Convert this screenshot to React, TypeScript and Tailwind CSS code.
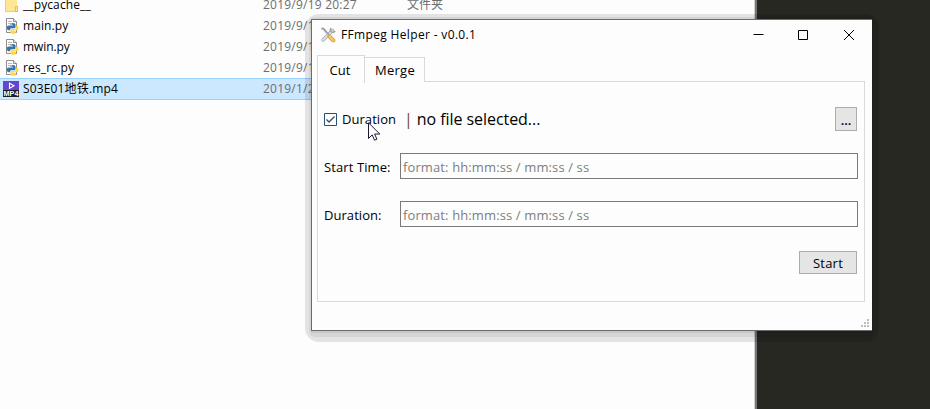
import React from "react";

const font = "font-['Open_Sans','Noto_Sans','Noto_Sans_CJK_SC',sans-serif]";

function FolderIcon() {
  return (
    <svg className="h-4 w-4" viewBox="0 0 16 16" shapeRendering="crispEdges">
      <path d="M2 0h12v14H2z" fill="#ffe694" />
      <path d="M2 0h1v14H2zM2 14h11v1H2z" fill="#f3cf6b" />
      <path d="M12 9h2v5h-2z" fill="#ffe694" stroke="#e8c05a" strokeWidth="1" />
    </svg>
  );
}

function PythonIcon() {
  return (
    <svg className="h-4 w-4" viewBox="0 0 16 16">
      <path d="M3.500.5h7l3 3v11h-10z" fill="#fdfdfd" stroke="#8d8d8d" />
      <path d="M10.500.5v3h3" fill="#eee" stroke="#8d8d8d" />
      <path d="M5 3.500h4M5 5.500h3" stroke="#b9b9b9" />
      <path d="M7.500 6.500q0-1.500 2.500-1.500t2.500 1.500V9q0 1.200-1.200 1.200H8.500q-1.600 0-1.600 2H5.500Q3.800 12 3.800 9.800t1.900-2.200H10V7H7.500z" fill="#3773a8" />
      <path d="M13.100 7.700h.8q1.700.1 1.700 2.300t-1.800 2.300h-3.500v.6h2.500v1.200Q12.800 16 10.200 16 7.500 16 7.500 14.200v-2q0-1.200 1.300-1.200h2.800q1.500 0 1.500-1.600z" fill="#ffd94a" />
      <circle cx="8.800" cy="6.300" r=".5" fill="#fff" />
    </svg>
  );
}

function Mp4Icon() {
  return (
    <svg className="h-4 w-4" viewBox="0 0 16 16">
      <rect width="16" height="9.500" fill="#6346d0" />
      <path d="M0 9h16v7H0z" fill="#1d1d22" />
      <path d="M6.500 2.200v5L11 4.700z" fill="#6346d0" stroke="#fff" strokeWidth="1.100" />
      <text x=".6" y="15.200" fontSize="7.200" fontWeight="700" fill="#fff" textLength="14.800" lengthAdjust="spacingAndGlyphs" fontFamily="Liberation Sans, sans-serif">MP4</text>
    </svg>
  );
}

const files = [
  { name: "__pycache__", date: "2019/9/19 20:27", kind: "文件夹", icon: <FolderIcon />, track: "tracking-[0.1px]" },
  { name: "main.py", date: "2019/9/19 20:27", kind: "", icon: <PythonIcon />, track: "tracking-[0.1px]" },
  { name: "mwin.py", date: "2019/9/19 20:27", kind: "", icon: <PythonIcon />, track: "tracking-[-0.1px]" },
  { name: "res_rc.py", date: "2019/9/19 20:27", kind: "", icon: <PythonIcon />, track: "tracking-[0.15px]" },
  { name: "S03E01地铁.mp4", date: "2019/1/20 20:27", kind: "", icon: <Mp4Icon />, track: "tracking-[0.15px]", selected: true },
];

function Explorer() {
  return (
    <div className="h-[409px] w-[757px] overflow-hidden border-r-2 border-[#77777a] bg-[#fdfdfd]">
      <div className="-mt-[6px] h-[415px] border-r border-[#d0d0d0]">
        {files.map((f) => (
          <div
            key={f.name}
            className={`flex items-center border-y pl-[3px] text-[12px] leading-[20px] text-black ${
              f.selected ? "h-[22px] border-[#99d1ff] bg-[#cce8ff]" : "h-[21px] border-transparent"
            }`}
          >
            {f.icon}
            <span className={`ml-1 w-[240px] whitespace-nowrap ${f.track}`}>{f.name}</span>
            <span className="w-[144px] whitespace-nowrap tracking-[0.22px] text-[#6d6d6d]">{f.date}</span>
            <span className="text-[#6d6d6d]">{f.kind}</span>
          </div>
        ))}
      </div>
    </div>
  );
}

function ToolsIcon() {
  return (
    <svg className="h-4 w-4" viewBox="0 0 16 16" fill="none">
      <path d="M12.500 3.500 3 13" stroke="#a3a6aa" strokeWidth="3.400" strokeLinecap="round" />
      <path d="M12.500 3.500 3 13" stroke="#dfe1e4" strokeWidth="2" strokeLinecap="round" />
      <path d="M11 1q-1.500 2.500.5 3.800t3.700-.8" stroke="#a3a6aa" strokeWidth="1.600" />
      <path d="M1.500 1.500 3.500 2l5 6" stroke="#9a9da2" strokeWidth="2.400" />
      <path d="M2 2l5.500 6" stroke="#e6e8ea" />
      <path d="m9.600 9.600 3.700 3.700" stroke="#c9963b" strokeWidth="4" strokeLinecap="round" />
      <path d="m9.600 9.600 3.700 3.700" stroke="#ffc955" strokeWidth="2.600" strokeLinecap="round" />
    </svg>
  );
}

function TitleBar() {
  return (
    <div className="flex h-[30px] items-center pl-2">
      <ToolsIcon />
      <span className="ml-[5px] whitespace-nowrap text-[12px] tracking-[0.34px]">FFmpeg Helper - v0.0.1</span>
      <svg className="mr-[17px] ml-auto h-[12px] w-[102px]" viewBox="0 0 102 12" fill="none" stroke="#000">
        <path d="M.5 5.500h10M45.500 1.500h9v9h-9zM91 1l10 10M101 1 91 11" />
      </svg>
    </div>
  );
}

function TimeRow({ label, track }: { label: string; track: string }) {
  return (
    <div className="flex h-[26px] items-center">
      <span className={`w-[76px] pt-[2px] whitespace-nowrap ${track}`}>{label}</span>
      <div className="flex h-[26px] w-[458px] items-center border border-[#7a7a7a] pt-[2px] pl-[2px] text-[#7d7d7d]">
        <span className="whitespace-nowrap tracking-[0.12px]">format: hh:mm:ss / mm:ss / ss</span>
      </div>
    </div>
  );
}

export default function App() {
  return (
    <div className={`relative h-[409px] w-[930px] overflow-hidden bg-[#282822] ${font}`}>
      <Explorer />
      <div className="absolute top-[14px] left-[305px] h-[328px] w-[574px] rounded-[14px] bg-black/10" />
      <div className="absolute top-[17px] left-[309px] h-[320px] w-[565px] rounded-[6px] bg-black/6" />
      <div className="absolute top-[19px] left-[311px] h-[312px] w-[561px] border-t border-b border-l border-[#6b6b6b] bg-[#fdfdfd] text-[13px] leading-[18px] text-black shadow-[0_2px_0_rgba(0,0,0,0.06)]">
        <TitleBar />
        <div className="mt-[5px] ml-[5px] flex h-[27px] items-end">
          <div className="-mr-px -mb-px flex h-[28px] w-[48px] items-center justify-center border border-b-0 border-[#d9d9d9] bg-[#fdfdfd] pr-[2px]">
            <span className="tracking-[0.1px]">Cut</span>
          </div>
          <div className="flex h-[25px] w-[61px] items-center justify-center border border-b-0 border-[#d9d9d9] bg-[#fdfdfd] pl-px">
            <span className="tracking-[0.3px]">Merge</span>
          </div>
        </div>
        <div className="-mt-px ml-[5px] h-[221px] w-[548px] border border-[#d9d9d9] pl-[6px]">
          <div className="mt-[25px] flex h-[24px] w-[533px] items-center">
            <svg className="h-[13px] w-[13px]" viewBox="0 0 13 13" fill="none" stroke="#2d4f70">
              <path d="M.5.5h12v12H.5z" />
              <path d="m2.500 6.500 2.500 2.500 5.500-5.500" strokeWidth="1.300" />
            </svg>
            <span className="ml-[5px] w-[62px] whitespace-nowrap tracking-[0.05px]">Duration</span>
            <span className="text-[16px] whitespace-nowrap tracking-[-0.06px]">
              <span className="text-[#7a4212]">|</span> no file selected...
            </span>
            <button className="ml-auto flex h-[24px] w-[22px] items-center justify-center border border-[#adadad] bg-[#e5e5e5] pt-px font-semibold">...</button>
          </div>
          <div className="mt-[22px] flex flex-col gap-[22px]">
            <TimeRow label="Start Time:" track="tracking-[0.1px]" />
            <TimeRow label="Duration:" track="tracking-[0.05px]" />
          </div>
          <div className="mt-[24px] flex w-[533px] justify-end">
            <button className="flex h-[23px] w-[58px] items-center justify-center border border-[#adadad] bg-[#e5e5e5] tracking-[0.2px]">Start</button>
          </div>
        </div>
        <svg className="mt-[17px] mr-[3px] ml-auto h-[8px] w-[8px]" viewBox="0 0 8 8" fill="#bdbdbd">
          <path d="M6 0h2v2H6zM3 3h2v2H3zM6 3h2v2H6zM0 6h2v2H0zM3 6h2v2H3zM6 6h2v2H6z" />
        </svg>
      </div>
      <svg className="absolute top-[122px] left-[368px] h-[20px] w-[13px]" viewBox="0 0 13 20">
        <path d="M.5.800v15.700l3.700-3.600 2.300 5.300 2.400-1-2.300-5.200h5.200z" fill="#fff" stroke="#1a1a35" />
      </svg>
    </div>
  );
}
